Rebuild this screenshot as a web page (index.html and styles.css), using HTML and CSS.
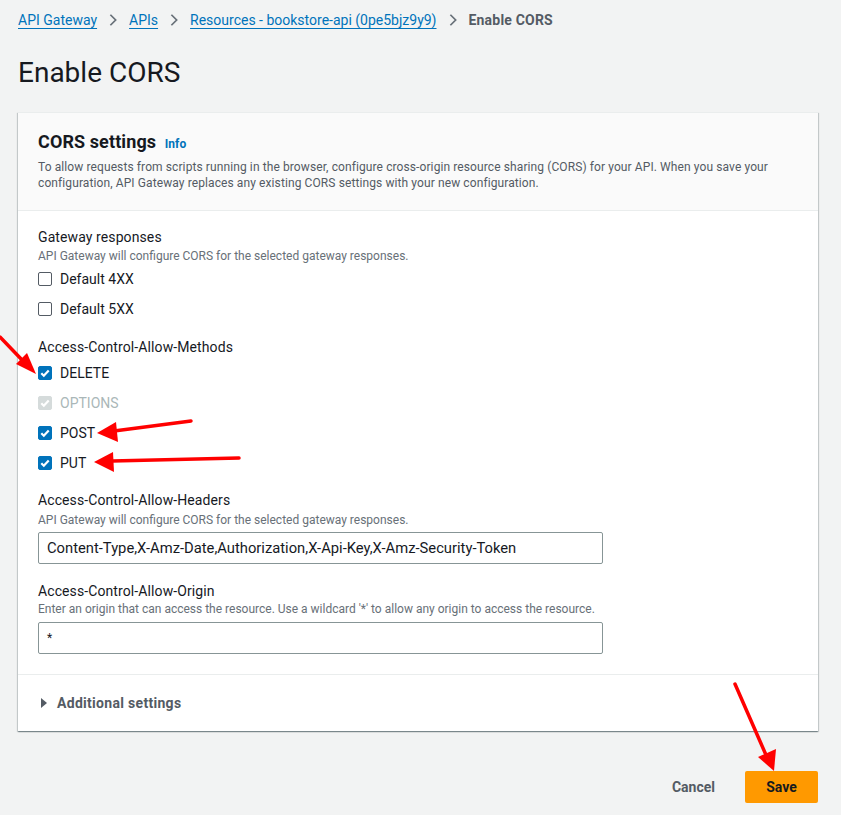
FILE: index.html
```html
<!DOCTYPE html>
<html>
<head>
<meta charset="utf-8">
<link rel="stylesheet" href="styles.css">
</head>
<body>
<div class="page">
  <nav class="crumbs">
    <a class="crumb-link" href="#">API Gateway</a>
    <svg class="chev" viewBox="0 0 16 16"><path d="M5 2l6 6-6 6" fill="none" stroke="#687078" stroke-width="2"/></svg>
    <a class="crumb-link" href="#">APIs</a>
    <svg class="chev" viewBox="0 0 16 16"><path d="M5 2l6 6-6 6" fill="none" stroke="#687078" stroke-width="2"/></svg>
    <a class="crumb-link" href="#">Resources - bookstore-api (0pe5bjz9y9)</a>
    <svg class="chev" viewBox="0 0 16 16"><path d="M5 2l6 6-6 6" fill="none" stroke="#687078" stroke-width="2"/></svg>
    <span class="crumb-current">Enable CORS</span>
  </nav>

  <h1 class="title">Enable CORS</h1>

  <section class="card">
    <header class="card-head">
      <h2 class="card-title">CORS settings <a class="info" href="#">Info</a></h2>
      <p class="card-desc">To allow requests from scripts running in the browser, configure cross-origin resource sharing (CORS) for your API. When you save your configuration, API Gateway replaces any existing CORS settings with your new configuration.</p>
    </header>
    <div class="card-body">
      <div class="field">
        <div class="label">Gateway responses</div>
        <div class="hint">API Gateway will configure CORS for the selected gateway responses.</div>
        <div class="checks">
          <label class="check"><span class="box"></span><span>Default 4XX</span></label>
          <label class="check"><span class="box"></span><span>Default 5XX</span></label>
        </div>
      </div>

      <div class="field methods">
        <div class="label">Access-Control-Allow-Methods</div>
        <div class="checks">
          <label class="check"><span class="box on"><svg viewBox="0 0 14 14"><path d="M3.3 7.3l2.5 2.4 4.9-5.2" fill="none" stroke="#fff" stroke-width="2.2"/></svg></span><span>DELETE</span></label>
          <label class="check disabled"><span class="box dis"><svg viewBox="0 0 14 14"><path d="M3.3 7.3l2.5 2.4 4.9-5.2" fill="none" stroke="#fff" stroke-width="2.2"/></svg></span><span>OPTIONS</span></label>
          <label class="check"><span class="box on"><svg viewBox="0 0 14 14"><path d="M3.3 7.3l2.5 2.4 4.9-5.2" fill="none" stroke="#fff" stroke-width="2.2"/></svg></span><span>POST</span></label>
          <label class="check"><span class="box on"><svg viewBox="0 0 14 14"><path d="M3.3 7.3l2.5 2.4 4.9-5.2" fill="none" stroke="#fff" stroke-width="2.2"/></svg></span><span>PUT</span></label>
        </div>
      </div>

      <div class="field headers">
        <div class="label">Access-Control-Allow-Headers</div>
        <div class="hint">API Gateway will configure CORS for the selected gateway responses.</div>
        <div class="input">Content-Type,X-Amz-Date,Authorization,X-Api-Key,X-Amz-Security-Token</div>
      </div>

      <div class="field origin">
        <div class="label">Access-Control-Allow-Origin</div>
        <div class="hint">Enter an origin that can access the resource. Use a wildcard '*' to allow any origin to access the resource.</div>
        <div class="input small">*</div>
      </div>
    </div>
    <div class="card-foot">
      <svg class="caret" viewBox="0 0 8 12"><path d="M1 1l6 5-6 5z" fill="#545b64"/></svg>
      <span>Additional settings</span>
    </div>
  </section>

  <div class="actions">
    <button class="btn-link">Cancel</button>
    <button class="btn-primary">Save</button>
  </div>
</div>

<svg class="annot" width="841" height="815" viewBox="0 0 841 815">
  <g stroke="#f00" stroke-width="3.5" fill="#f00" stroke-linecap="round">
    <line x1="0" y1="337" x2="24" y2="362"/>
    <polygon points="36,374 16,364 27,353" stroke="none"/>
    <line x1="191" y1="421" x2="114" y2="431"/>
    <polygon points="97,433 116,422 118,442" stroke="none"/>
    <line x1="239" y1="458" x2="112" y2="461"/>
    <polygon points="94,462 113,452 114,472" stroke="none"/>
    <line x1="735" y1="684" x2="766" y2="755"/>
    <polygon points="774,771 758,757 776,749" stroke="none"/>
  </g>
</svg>
</body>
</html>
```

FILE: styles.css
```css
html, body {
  margin: 0;
  padding: 0;
}
body {
  background: #f2f3f3;
  font-family: Roboto, "Liberation Sans", Arial, sans-serif;
  color: #16191f;
  width: 841px;
  height: 815px;
  overflow: hidden;
  position: relative;
}
.page {
  padding: 0 23px 0 18px;
}
.crumbs {
  display: flex;
  align-items: center;
  height: 20px;
  padding-top: 10px;
  font-size: 14px;
}
.crumb-link {
  color: #0073bb;
  text-decoration: underline;
  text-underline-offset: 3px;
}
.chev {
  width: 14px;
  height: 14px;
  margin: 0 9px;
}
.crumb-current {
  color: #545b64;
  font-weight: 700;
  letter-spacing: 0.2px;
}
.title {
  margin: 0;
  padding-top: 26px;
  font-size: 28px;
  line-height: 34px;
  font-weight: 400;
  color: #16191f;
}
.card {
  margin-top: 22px;
  background: #fff;
  box-shadow: 0 1px 1px rgba(0,28,36,0.3), 1px 1px 1px rgba(0,28,36,0.15), -1px 1px 1px rgba(0,28,36,0.15);
  border-top: 1px solid #eaeded;
}
.card-head {
  background: #fafafa;
  border-bottom: 1px solid #eaeded;
  padding: 18px 20px 19px;
}
.card-title {
  margin: 0;
  font-size: 18px;
  line-height: 22px;
  font-weight: 700;
  color: #16191f;
  letter-spacing: 0.1px;
}
.info {
  color: #0073bb;
  font-size: 12px;
  font-weight: 700;
  text-decoration: none;
  margin-left: 4px;
}
.card-desc {
  margin: 4px 0 0;
  font-size: 12px;
  line-height: 16px;
  color: #545b64;
  letter-spacing: 0.1px;
}
.card-body {
  padding: 16px 20px 20px;
  border-bottom: 1px solid #eaeded;
}
.label {
  font-size: 14px;
  line-height: 20px;
  color: #16191f;
  letter-spacing: 0.1px;
}
.hint {
  font-size: 12px;
  line-height: 16px;
  color: #687078;
  margin-top: 1px;
}
.checks {
  display: flex;
  flex-direction: column;
}
.methods {
  margin-top: 13px;
}
.methods .checks {
  margin-top: 1px;
}
.headers {
  margin-top: 12px;
}
.headers .hint {
  margin-top: 2px;
}
.origin {
  margin-top: 17px;
}
.origin .hint {
  margin-top: 0;
}
.check {
  display: flex;
  align-items: center;
  height: 30px;
  font-size: 14px;
  color: #16191f;
}
.check.disabled {
  color: #aab7b8;
}
.box {
  width: 12px;
  height: 12px;
  border: 1px solid #545b64;
  border-radius: 2px;
  margin-right: 8px;
  display: flex;
  align-items: center;
  justify-content: center;
  background: #fff;
}
.box svg {
  width: 14px;
  height: 14px;
  flex: none;
}
.box.on {
  background: #0073bb;
  border-color: #0073bb;
}
.box.dis {
  background: #d5dbdb;
  border-color: #d5dbdb;
}
.input {
  margin-top: 4px;
  width: 547px;
  height: 30px;
  border: 1px solid #879596;
  border-radius: 2px;
  box-sizing: content-box;
  padding: 0 8px;
  font-size: 14.75px;
  line-height: 30px;
  color: #16191f;
}
.input.small {
  margin-top: 5px;
  font-size: 12px;
}
.card-foot {
  display: flex;
  align-items: center;
  height: 56px;
  padding: 0 22px;
  font-size: 14px;
  font-weight: 700;
  color: #545b64;
  letter-spacing: 0.3px;
}
.caret {
  width: 8px;
  height: 12px;
  margin-right: 9px;
}
.actions {
  display: flex;
  justify-content: flex-end;
  align-items: center;
  margin-top: 40px;
  gap: 10px;
}
.btn-link, .btn-primary {
  font-family: inherit;
  font-size: 14px;
  font-weight: 700;
  border: none;
  height: 32px;
  padding: 0 20px;
  cursor: pointer;
}
.btn-link {
  background: transparent;
  color: #545b64;
}
.btn-primary {
  background: #ff9900;
  color: #16191f;
  border-radius: 2px;
  width: 73px;
  padding: 0;
}
.annot {
  position: absolute;
  left: 0;
  top: 0;
  pointer-events: none;
}
```
